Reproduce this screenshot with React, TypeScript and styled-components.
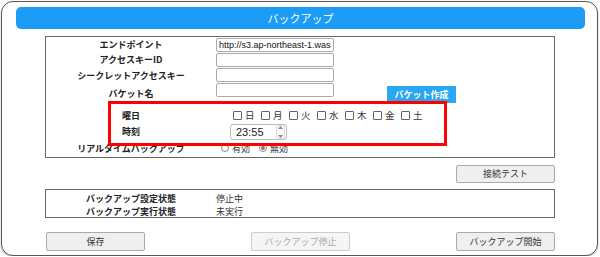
import React from "react";
import styled, { createGlobalStyle } from "styled-components";

const GlobalStyle = createGlobalStyle`
  body {
    margin: 0;
    background: #ffffff;
    font-family: "Noto Sans CJK JP", "Liberation Sans", sans-serif;
    color: #222;
  }
`;

const Card = styled.div`
  box-sizing: border-box;
  width: 597px;
  height: 255px;
  margin: 1px 0 0 1px;
  padding: 5px 12px 0 14px;
  border: 1px solid #555;
  border-radius: 12px;
  box-shadow: 0 1px 2px rgba(0, 0, 0, 0.25);
  background: #fff;
`;

const TitleBar = styled.div`
  height: 22px;
  line-height: 22px;
  background: #1c9cf4;
  border-radius: 5px;
  color: #fff;
  font-size: 11px;
  text-align: center;
`;

const Section = styled.div`
  box-sizing: border-box;
  width: 510px;
  margin-left: 29px;
`;

const FormBox = styled(Section)`
  position: relative;
  margin-top: 7px;
  border: 1px solid #666;
  padding-bottom: 1px;
`;

const Row = styled.div<{ $h: number }>`
  display: grid;
  grid-template-columns: 170px 1fr;
  align-items: center;
  height: ${(p) => p.$h}px;
`;

const Label = styled.div`
  text-align: center;
  font-size: 9px;
  font-weight: bold;
  color: #222;
  white-space: nowrap;
`;

const Value = styled.div`
  display: flex;
  align-items: center;
  font-size: 9px;
  color: #333;
  white-space: nowrap;
  height: 100%;
`;

const TextInput = styled.input<{ $top?: boolean }>`
  box-sizing: border-box;
  width: 118px;
  height: 14px;
  margin: 0;
  border: 1px solid #aaa;
  border-radius: 2px;
  font-family: "Liberation Sans", Arial, sans-serif;
  font-size: 9px;
  padding: 0 2px;
  color: #111;
  background: #fff;
  outline: none;
  align-self: ${(p) => (p.$top ? "flex-start" : "center")};
`;

const BlueButton = styled.div`
  align-self: flex-end;
  margin-left: 53px;
  width: 69px;
  height: 17px;
  line-height: 17px;
  background: #29a8f1;
  color: #fff;
  font-size: 9px;
  font-weight: bold;
  text-align: center;
`;

const Nested = styled.div`
  height: 37px;
  padding-top: 4px;
  box-sizing: border-box;
  margin-left: 76px;
`;

const NestedRow = styled.div<{ $h: number }>`
  display: grid;
  grid-template-columns: 108px 1fr;
  align-items: center;
  height: ${(p) => p.$h}px;
`;

const NestedLabel = styled.div`
  font-size: 9px;
  font-weight: bold;
  color: #222;
`;

const Days = styled.div`
  display: flex;
  align-items: center;
  padding-left: 3px;
  font-size: 9.5px;
  color: #333;
`;

const Check = styled.span`
  box-sizing: border-box;
  width: 9px;
  height: 9px;
  border: 1px solid #666;
  border-radius: 1px;
  margin-right: 3px;
  background: #fff;
`;

const DayName = styled.span`
  width: 16px;
`;

const TimeBox = styled.div`
  box-sizing: border-box;
  display: flex;
  align-items: center;
  justify-content: space-between;
  width: 57px;
  height: 16px;
  border: 1px solid #bbb;
  border-radius: 3px;
  padding: 0 1px 0 5px;
  font-family: "Liberation Sans", Arial, sans-serif;
  font-size: 11px;
  color: #222;
`;

const Spinner = styled.div`
  display: flex;
  flex-direction: column;
  justify-content: space-between;
  align-items: center;
  width: 7px;
  height: 12px;
  border: 1px solid #ddd;
  border-radius: 2px;
  background: #f7f7f7;
`;

const Radio = styled.span<{ $on?: boolean }>`
  box-sizing: border-box;
  display: inline-flex;
  align-items: center;
  justify-content: center;
  width: 8px;
  height: 8px;
  border: 1px solid #888;
  border-radius: 50%;
  margin: 0 3px 0 ${(p) => (p.$on ? 9 : 5)}px;
  &::after {
    content: "";
    width: 4px;
    height: 4px;
    border-radius: 50%;
    background: ${(p) => (p.$on ? "#777" : "transparent")};
  }
`;

const Highlight = styled.div`
  position: absolute;
  left: 62px;
  top: 64px;
  width: 339px;
  height: 45px;
  box-sizing: border-box;
  border: 3px solid #ff0000;
  pointer-events: none;
`;

const GrayButton = styled.div<{ $disabled?: boolean }>`
  box-sizing: border-box;
  width: 99px;
  height: 19px;
  line-height: 17px;
  border: 1px solid ${(p) => (p.$disabled ? "#ccc" : "#aaa")};
  border-radius: 2px;
  background: ${(p) => (p.$disabled ? "#f5f5f5" : "#efefef")};
  color: ${(p) => (p.$disabled ? "#aaa" : "#333")};
  font-size: 9px;
  text-align: center;
`;

const TestRow = styled(Section)`
  display: flex;
  justify-content: flex-end;
  margin-top: 7px;
  & > div {
    height: 18px;
    line-height: 16px;
  }
`;

const StatusBox = styled(Section)`
  margin-top: 6px;
  height: 29px;
  border: 1px solid #666;
  padding-top: 1px;
`;

const ButtonRow = styled(Section)`
  display: flex;
  justify-content: space-between;
  margin-top: 14px;
  padding-left: 1px;
`;

const days = ["日", "月", "火", "水", "木", "金", "土"];

export default function App() {
  return (
    <>
      <GlobalStyle />
      <Card>
        <TitleBar>バックアップ</TitleBar>

        <FormBox>
          <Row $h={15}>
            <Label>エンドポイント</Label>
            <Value>
              <TextInput readOnly value="http://s3.ap-northeast-1.wasabisys.com" />
            </Value>
          </Row>
          <Row $h={15}>
            <Label>アクセスキーID</Label>
            <Value>
              <TextInput readOnly value="" />
            </Value>
          </Row>
          <Row $h={16}>
            <Label>シークレットアクセスキー</Label>
            <Value>
              <TextInput readOnly value="" />
            </Value>
          </Row>
          <Row $h={20}>
            <Label>バケット名</Label>
            <Value>
              <TextInput $top readOnly value="" />
              <BlueButton>バケット作成</BlueButton>
            </Value>
          </Row>

          <Nested>
            <NestedRow $h={16}>
              <NestedLabel>曜日</NestedLabel>
              <Days>
                {days.map((d) => (
                  <React.Fragment key={d}>
                    <Check />
                    <DayName>{d}</DayName>
                  </React.Fragment>
                ))}
              </Days>
            </NestedRow>
            <NestedRow $h={17}>
              <NestedLabel>時刻</NestedLabel>
              <TimeBox>
                23:55
                <Spinner>
                  <svg width="5" height="3" viewBox="0 0 5 3">
                    <path d="M0 3 L2.5 0 L5 3 Z" fill="#888" />
                  </svg>
                  <svg width="5" height="3" viewBox="0 0 5 3">
                    <path d="M0 0 L2.5 3 L5 0 Z" fill="#888" />
                  </svg>
                </Spinner>
              </TimeBox>
            </NestedRow>
          </Nested>

          <Row $h={16}>
            <Label>リアルタイムバックアップ</Label>
            <Value>
              <Radio />
              有効
              <Radio $on />
              無効
            </Value>
          </Row>

          <Highlight />
        </FormBox>

        <TestRow>
          <GrayButton>接続テスト</GrayButton>
        </TestRow>

        <StatusBox>
          <Row $h={14}>
            <Label>バックアップ設定状態</Label>
            <Value>停止中</Value>
          </Row>
          <Row $h={13}>
            <Label>バックアップ実行状態</Label>
            <Value>未実行</Value>
          </Row>
        </StatusBox>

        <ButtonRow>
          <GrayButton>保存</GrayButton>
          <GrayButton $disabled>バックアップ停止</GrayButton>
          <GrayButton>バックアップ開始</GrayButton>
        </ButtonRow>
      </Card>
    </>
  );
}
